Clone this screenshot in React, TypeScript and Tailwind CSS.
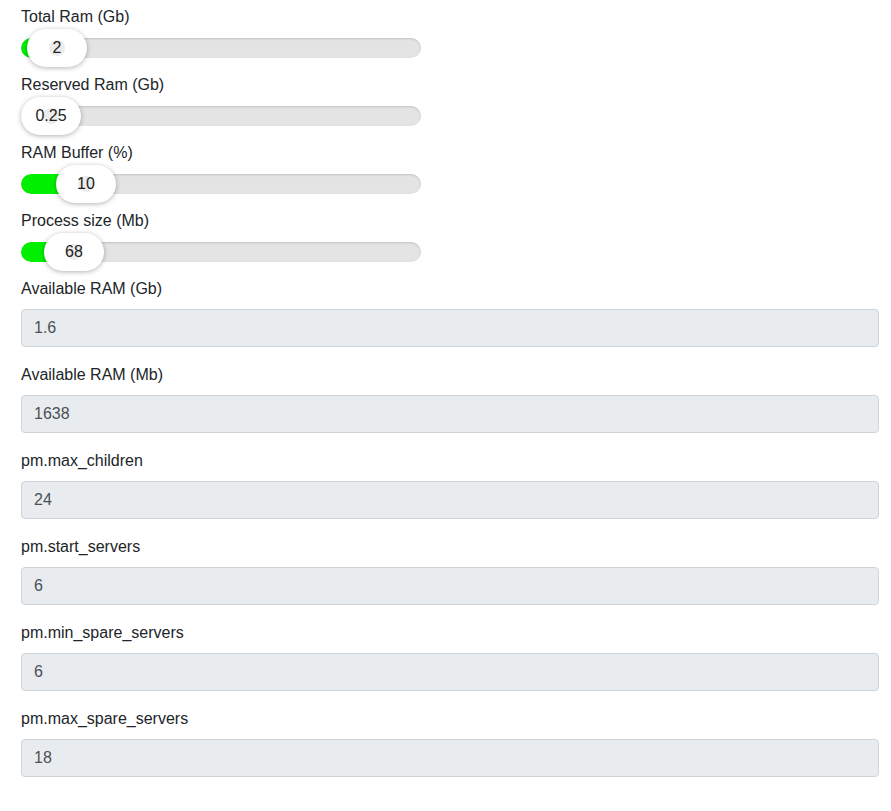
import React from "react";

type SliderProps = { label: string; value: string; pos: number; fill: boolean };

const sliders: SliderProps[] = [
  { label: "Total Ram (Gb)", value: "2", pos: 36, fill: true },
  { label: "Reserved Ram (Gb)", value: "0.25", pos: 30, fill: false },
  { label: "RAM Buffer (%)", value: "10", pos: 65, fill: true },
  { label: "Process size (Mb)", value: "68", pos: 53, fill: true },
];

const fields = [
  { label: "Available RAM (Gb)", value: "1.6" },
  { label: "Available RAM (Mb)", value: "1638" },
  { label: "pm.max_children", value: "24" },
  { label: "pm.start_servers", value: "6" },
  { label: "pm.min_spare_servers", value: "6" },
  { label: "pm.max_spare_servers", value: "18" },
];

const Slider = ({ label, value, pos, fill }: SliderProps) => (
  <div className="mb-[6px]">
    <label className="block text-base leading-6 text-[#212529]">{label}</label>
    <div className="relative h-[38px] w-[400px]">
      <div className="absolute left-0 right-0 top-[9px] h-5 rounded-full bg-[#e4e4e4] shadow-[inset_0_1px_2px_rgba(0,0,0,0.15)] overflow-hidden">
        {fill && (
          <div className="h-full rounded-full bg-[#00f000]" style={{ width: pos }} />
        )}
      </div>
      <div
        className="absolute top-0 flex h-[38px] w-[60px] -translate-x-1/2 items-center justify-center rounded-full bg-white shadow-[0_1px_5px_rgba(0,0,0,0.3)]"
        style={{ left: pos }}
      >
        <span className="absolute h-4 w-4 rounded-full bg-[#ececec]" />
        <span className="relative text-base text-[#222]">{value}</span>
      </div>
    </div>
  </div>
);

export default function App() {
  return (
    <div
      className="min-h-screen bg-white px-[21px] pt-[5px] pb-4 text-base"
      style={{ fontFamily: '"Liberation Sans", Arial, sans-serif' }}
    >
      {sliders.map((s) => (
        <Slider key={s.label} {...s} />
      ))}
      <div>
        {fields.map((f) => (
          <div key={f.label} className="mb-4">
            <label className="mb-2 block text-base leading-6 text-[#212529]">{f.label}</label>
            <div className="flex h-[38px] w-[858px] items-center rounded border border-[#ced4da] bg-[#e9ecef] px-3 text-base text-[#495057]">
              {f.value}
            </div>
          </div>
        ))}
      </div>
    </div>
  );
}
